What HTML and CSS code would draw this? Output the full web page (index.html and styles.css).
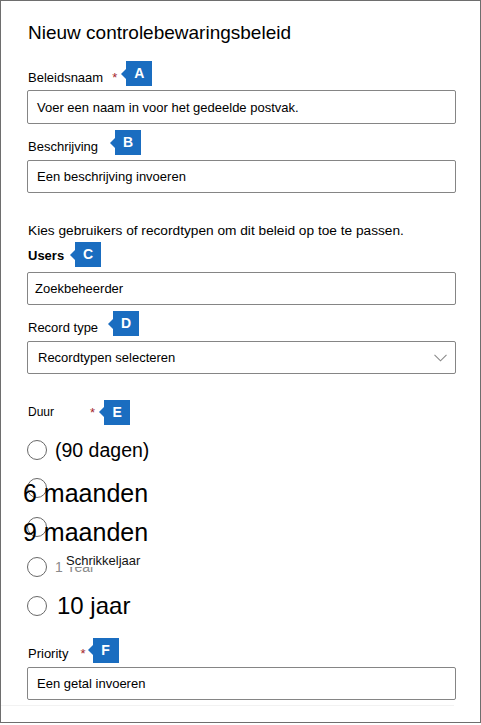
FILE: index.html
```html
<!DOCTYPE html>
<html lang="nl">
<head>
<meta charset="utf-8">
<title>Nieuw controlebewaringsbeleid</title>
<link rel="stylesheet" href="styles.css">
</head>
<body>
<div class="panel">
  <h1 class="title">Nieuw controlebewaringsbeleid</h1>

  <div class="label-row row-a">
    <span class="label lbl-a">Beleidsnaam</span><span class="req req-a">*</span>
    <span class="badge"><span class="badge-box">A</span></span>
  </div>
  <div class="input in-a">Voer een naam in voor het gedeelde postvak.</div>

  <div class="label-row row-b">
    <span class="label lbl-b">Beschrijving</span>
    <span class="badge"><span class="badge-box">B</span></span>
  </div>
  <div class="input in-b">Een beschrijving invoeren</div>

  <p class="hint">Kies gebruikers of recordtypen om dit beleid op toe te passen.</p>

  <div class="label-row row-c">
    <span class="label label-strong lbl-c">Users</span>
    <span class="badge"><span class="badge-box">C</span></span>
  </div>
  <div class="input in-c">Zoekbeheerder</div>

  <div class="label-row row-d">
    <span class="label lbl-d">Record type</span>
    <span class="badge"><span class="badge-box">D</span></span>
  </div>
  <div class="input select in-d">
    <span>Recordtypen selecteren</span>
    <svg class="chevron" width="13" height="8" viewBox="0 0 13 8"><polyline points="0.5,0.8 6.5,6.8 12.5,0.8" fill="none" stroke="#8a8a8a" stroke-width="1.1"/></svg>
  </div>

  <div class="label-row row-e">
    <span class="label label-small lbl-e">Duur</span><span class="req req-e">*</span>
    <span class="badge"><span class="badge-box">E</span></span>
  </div>

  <div class="options">
    <div class="opt opt-1"><span class="circle"></span><span class="opt-text t-90">(90 dagen)</span></div>
    <div class="opt opt-big opt-2"><span class="circle"></span><span class="opt-text t-big">6 maanden</span></div>
    <div class="opt opt-big opt-3"><span class="circle"></span><span class="opt-text t-big">9 maanden</span></div>
    <div class="opt opt-4"><span class="circle"></span><span class="opt-text t-year">1 Year</span><span class="leap">Schrikkeljaar</span></div>
    <div class="opt opt-5"><span class="circle"></span><span class="opt-text t-10">10 jaar</span></div>
  </div>

  <div class="label-row row-f">
    <span class="label lbl-f">Priority</span><span class="req req-f">*</span>
    <span class="badge"><span class="badge-box">F</span></span>
  </div>
  <div class="input in-f">Een getal invoeren</div>

  <div class="footer-line"></div>
</div>
</body>
</html>
```

FILE: styles.css
```css
html, body {
  margin: 0;
  padding: 0;
  background: #ffffff;
}

body {
  font-family: "Liberation Sans", Arial, sans-serif;
  color: #000000;
}

.panel {
  box-sizing: border-box;
  width: 481px;
  height: 723px;
  border: 1px solid #6e6e6e;
  padding: 0 0 0 26px;
  display: flex;
  flex-direction: column;
  align-items: flex-start;
}

.title {
  margin: 21px 0 0 1px;
  font-size: 19px;
  line-height: 22px;
  font-weight: normal;
  color: #000;
}

/* label rows with callout badges */
.label-row {
  display: flex;
  align-items: flex-end;
  height: 25px;
  margin-left: 1px;
}

.label {
  font-size: 13px;
  line-height: 16px;
  color: #000;
}

.label-strong {
  font-weight: bold;
  font-size: 13px;
}

.label-small {
  font-size: 12px;
}

.req {
  font-size: 13px;
  line-height: 16px;
  color: #a4262c;
}

.badge {
  display: flex;
  align-items: center;
  align-self: stretch;
}

.badge::before {
  content: "";
  width: 0;
  height: 0;
  border-top: 5px solid transparent;
  border-bottom: 5px solid transparent;
  border-right: 5px solid #1a6dc0;
}

.badge-box {
  width: 26px;
  height: 25px;
  background: #1a6dc0;
  color: #ffffff;
  font-size: 14px;
  font-weight: bold;
  line-height: 25px;
  text-align: center;
}

/* per-row spacing */
.row-a { margin-top: 17px; }
.lbl-a { margin-right: 9px; }
.req-a { margin-right: 4px; }

.row-b { margin-top: 6px; }
.lbl-b { margin-right: 12px; }

.row-c { margin-top: 3px; }
.lbl-c { margin-right: 6px; margin-bottom: 3px; }

.row-d { margin-top: 6px; }
.lbl-d { margin-right: 10px; }

.row-e { margin-top: 25px; height: 26px; align-items: center; }
.lbl-e { margin-right: 36px; }
.req-e { margin-right: 4px; align-self: center; margin-top: 2px; }

.row-f { margin-top: 17px; height: 26px; }
.lbl-f { margin-right: 12px; margin-bottom: 1px; }
.req-f { margin-right: 2px; margin-bottom: 1px; }

/* inputs */
.input {
  box-sizing: border-box;
  width: 429px;
  height: 33px;
  border: 1px solid #858585;
  border-radius: 2px;
  padding-left: 9px;
  display: flex;
  align-items: center;
  font-size: 13px;
  color: #000;
}

.in-a { margin-top: 4px; height: 34px; }
.in-b { margin-top: 5px; }
.in-c { margin-top: 5px; padding-left: 7px; }
.in-d { margin-top: 5px; padding-left: 10px; }
.in-f { margin-top: 4px; }

.select {
  justify-content: space-between;
  padding-right: 8px;
}

.chevron {
  display: block;
}

.hint {
  margin: 30px 0 0 1px;
  font-size: 13.7px;
  line-height: 16px;
}

/* radio options */
.options {
  display: flex;
  flex-direction: column;
  align-items: flex-start;
}

.opt {
  display: flex;
  align-items: center;
  position: relative;
}

.circle {
  box-sizing: border-box;
  flex: none;
  width: 20px;
  height: 20px;
  border: 1.5px solid #686868;
  border-radius: 50%;
  background: transparent;
}

.opt-text {
  color: #000;
  white-space: nowrap;
}

.opt-1 { margin-top: 15px; }
.t-90 {
  font-size: 19.5px;
  line-height: 20px;
  margin-left: 8px;
}

.opt-big {
  align-items: flex-start;
}
.opt-2 { margin-top: 18px; }
.opt-3 { margin-top: 10px; }
.t-big {
  font-size: 25px;
  line-height: 28px;
  margin-top: 1px;
  margin-left: -24px;
}

.opt-4 { margin-top: 11px; }
.t-year {
  font-size: 14px;
  line-height: 16px;
  color: #8a8a8a;
  margin-left: 8px;
}
.leap {
  position: absolute;
  left: 38px;
  top: -3px;
  padding: 0 1px;
  background: #ffffff;
  font-size: 13px;
  line-height: 13px;
  color: #141414;
  white-space: nowrap;
}

.opt-5 { margin-top: 15px; }
.t-10 {
  font-size: 24px;
  line-height: 28px;
  margin-left: 10px;
}

.footer-line {
  width: 453px;
  margin-left: -26px;
  margin-top: 5px;
  border-top: 1px solid #f2f2f2;
}
```
